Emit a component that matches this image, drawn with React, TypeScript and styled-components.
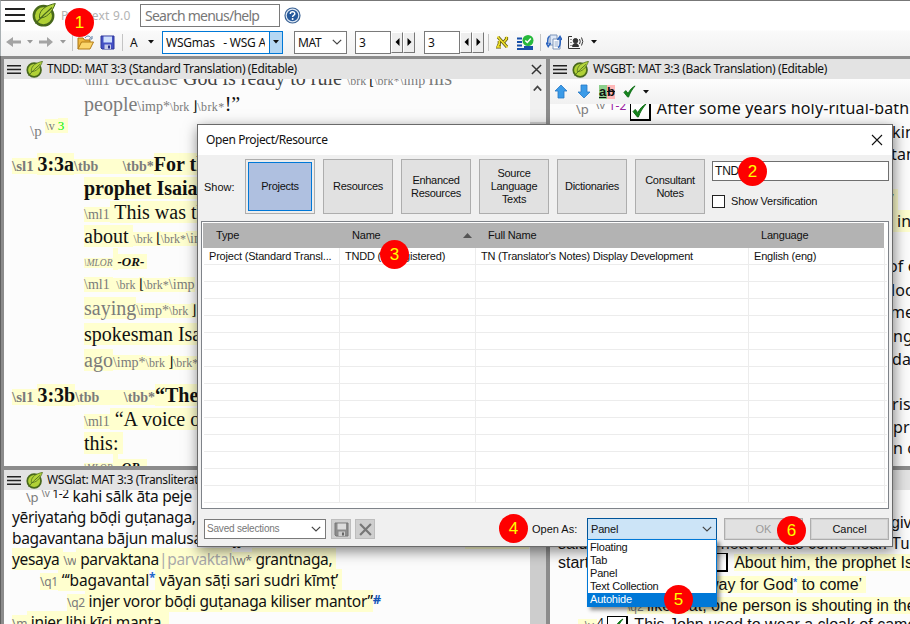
import React from 'react';
import styled, { createGlobalStyle, css } from 'styled-components';

const ui = `"Noto Sans", "Open Sans", sans-serif`;
const sans = `"Liberation Sans", Arial, sans-serif`;
const serif = `"Liberation Serif", "Times New Roman", serif`;

const Global = createGlobalStyle`
  * { box-sizing: border-box; }
  html, body { margin: 0; padding: 0; overflow: hidden; }
  body { font-family: ${ui}; color: #111; }
`;

const Window = styled.div`
  width: 910px; height: 624px; overflow: hidden; position: relative;
  display: flex; flex-direction: column; background: #8c8c8c;
`;
const TopBar = styled.header`
  flex: none; height: 56px; display: flex; flex-direction: column;
  border-top: 1px solid #777; border-left: 1px solid #a9b0b3;
  background: linear-gradient(#fff 0, #fff 29px, #fafafa 30px, #f1f1f1 55px);
`;
const MenuRow = styled.div`display: flex; align-items: center; height: 28px; padding-left: 4px;`;
const AppTitle = styled.span<{ $ls?: number }>`
  width: 84px; padding-left: 5px; font-size: 12px; color: #b3b3b3; white-space: nowrap;
  letter-spacing: ${p => p.$ls ?? 0}px;
`;
const MenuSearch = styled.div`
  width: 140px; height: 23px; border: 1px solid #7a7a7a; background: #fff; margin-right: 4px;
  font: 14px/21px ${ui}; letter-spacing: -0.75px; color: #777; padding-left: 4px; white-space: nowrap;
`;
const ToolRow = styled.div`display: flex; align-items: center; height: 26px; padding-left: 5px;`;
const Space = styled.i<{ $w: number }>`flex: none; width: ${p => p.$w}px;`;
const Divider = styled.i`flex: none; width: 1px; height: 17px; background: #c4c4c4;`;
const Letter = styled.span`font-size: 12px; width: 9px;`;
const Field = styled.div<{ $w: number; $active?: boolean }>`
  flex: none; display: flex; width: ${p => p.$w}px; height: 23px; background: #fff;
  border: 1px solid ${p => (p.$active ? '#0078d7' : '#7a7a7a')};
  font: 12px/21px ${ui}; padding-left: 3px; white-space: pre; overflow: hidden;
`;
const FieldText = styled.span<{ $ls?: number; $cut?: number }>`
  flex: 1; overflow: hidden; letter-spacing: ${p => p.$ls ?? 0}px; margin-right: ${p => p.$cut ?? 0}px;
`;
const FieldDrop = styled.span`
  width: 13px; display: flex; align-items: center; justify-content: center;
  background: #b5d7f3; border-left: 1px solid #0078d7;
`;
const Spin = styled.span`
  flex: none; width: 12px; height: 21px; background: #eee; display: flex; align-items: center; justify-content: center;
  border: 1px solid #fff; border-right-color: #777; border-bottom-color: #777;
`;

const Workspace = styled.main`
  flex: 1; min-height: 0; display: grid; padding: 3px 0 0 3px; gap: 4px;
  grid-template-columns: 542px 1fr; grid-template-rows: 407px 1fr; border-left: 1px solid #5f5f5f;
`;
const Panel = styled.section`display: flex; flex-direction: column; min-width: 0; min-height: 0; background: #fcfcfc; overflow: hidden;`;
const PanelTitle = styled.div`
  flex: none; height: 20px; background: #e3e3e3; display: flex; align-items: center; padding-left: 3px;
  font-size: 12px; white-space: nowrap; color: #111;
`;
const TitleText = styled.span`flex: 1; padding-left: 4px; line-height: 20px; letter-spacing: -0.37px;`;
const PanelTools = styled.div`
  flex: none; height: 25px; display: flex; align-items: center; padding-left: 4px;
  background: linear-gradient(#fdfdfd, #f1f1f1);
`;
const PanelBody = styled.div`flex: 1; min-height: 0; display: flex;`;
const Doc = styled.div`flex: 1; min-width: 0; overflow: hidden; display: flow-root;`;
const ScrollBar = styled.div`flex: none; width: 16px; background: #f0f0f0; display: flex; flex-direction: column;`;
const ScrollArrow = styled.div`height: 43px; padding: 6px 0 0 3px; line-height: 0;`;
const Thumb = styled.div`flex: 1; background: #cdcdcd;`;

const fonts = {
  serif: css`font-family: ${serif}; font-size: 20px; line-height: 24px; height: 24px;`,
  ui: css`font-family: ${ui}; font-size: 16px; line-height: 21px; height: 21px;`,
  tight: css`font-family: ${ui}; font-size: 15.5px; line-height: 21px; height: 21px;`,
  sans: css`font-family: ${sans}; font-size: 16px; line-height: 21px; height: 21px;`,
};
const Line = styled.div<{ $f: keyof typeof fonts; $x: number; $gap?: number }>`
  ${p => fonts[p.$f]}
  letter-spacing: ${p => (p.$f === 'tight' ? -0.32 : p.$f === 'ui' ? 0.15 : 0)}px;
  padding-left: ${p => p.$x}px; margin-top: ${p => p.$gap ?? 0}px; white-space: pre; color: #111;
`;
const T = styled.span<{ $hl?: boolean; $b?: boolean; $i?: boolean; $c?: string; $s?: number; $ls?: number; $up?: number; $ml?: number }>`
  background: ${p => (p.$hl ? '#ffffcf' : 'transparent')};
  font-weight: ${p => (p.$b ? 700 : 400)};
  font-style: ${p => (p.$i ? 'italic' : 'normal')};
  ${p => p.$c && `color: ${p.$c};`}
  ${p => p.$s && `font-size: ${p.$s}px;`}
  ${p => p.$up && `position: relative; top: -${p.$up}px;`}
  ${p => p.$ls && `letter-spacing: ${p.$ls}px;`}
  margin-left: ${p => p.$ml ?? 0}px;
`;
const Mark = styled(T).attrs(p => ({ $c: p.$c ?? '#7b7b7b' }))``;
const VerseCheck = styled.span<{ $y?: number }>`
  display: inline-flex; width: 21px; height: 19px; border: 1px solid #000; border-bottom-width: 2px; border-right-width: 2px; background: #fff;
  align-items: center; justify-content: center; vertical-align: ${p => p.$y ?? -5}px; margin-right: 6px;
`;
const HiddenRun = styled.span`display: inline-block; width: 118px;`;

const Dialog = styled.section`
  position: absolute; left: 197px; top: 124px; width: 696px; height: 423px; border: 1px solid #6a6a6a;
  background: #f0f0f0; box-shadow: 1px 4px 13px rgba(0,0,0,.5); display: flex; flex-direction: column;
  font: 11px/13px ${sans}; color: #111; letter-spacing: -0.2px;
`;
const DialogTitle = styled.div`
  height: 30px; flex: none; background: #fff; display: flex; align-items: center; justify-content: space-between;
  padding: 0 9px 0 8px; font: 12px/30px ${ui}; letter-spacing: -0.38px;
`;
const Filters = styled.div`display: flex; padding: 4px 0 0 6px; height: 66px; gap: 8px;`;
const ShowLabel = styled.span`width: 33px; padding-top: 22px; letter-spacing: 0;`;
const FilterButton = styled.button<{ $on?: boolean }>`
  flex: none; width: 70px; height: 55px; padding: 0 8px; border: 1px solid #adadad; background: ${p => (p.$on ? '#afc0e0' : '#e1e1e1')};
  ${p => p.$on && 'box-shadow: inset 0 0 0 2px #eee, inset 0 0 0 3px #0078d7;'}
  font: inherit; letter-spacing: -0.3px; color: inherit; text-align: center; display: flex; align-items: center; justify-content: center;
`;
const SearchColumn = styled.div`display: flex; flex-direction: column; padding-top: 2px; margin-left: -1px;`;
const SearchInput = styled.div`width: 177px; height: 20px; border: 1px solid #6f6f6f; background: #fff; padding-left: 2px; font-size: 12px; line-height: 18px;`;
const CheckRow = styled.div`display: flex; align-items: center; gap: 6px; margin-top: 14px; height: 13px;`;
const CheckBox = styled.i`width: 13px; height: 13px; border: 1px solid #222; background: #fff;`;

const Table = styled.div`
  margin: 0 3px; width: 688px; height: 288px; border: 1px solid #7f8389; background: #fff; padding: 1px 3px 0 1px;
`;
const TableRow = styled.div<{ $head?: boolean }>`
  display: grid; grid-template-columns: 136px 136px 273px 136px; width: 683px;
  height: ${p => (p.$head ? 25 : 17)}px; margin-left: ${p => (p.$head ? 0 : 1)}px;
  border-bottom: ${p => (p.$head ? 0 : 1)}px solid #ececec;
  ${p => p.$head && 'background: #b3b3b3; width: 681px;'}
`;
const Cell = styled.div<{ $head?: boolean }>`
  display: flex; align-items: center; white-space: nowrap; overflow: hidden;
  padding: 0 4px 0 ${p => (p.$head ? 13 : 5)}px;
  border-right: ${p => (p.$head ? 0 : 1)}px solid #ececec; justify-content: space-between;
`;
const SortMark = styled.svg`margin-right: -1px;`;
const Footer = styled.div`display: flex; padding: 10px 0 0 6px; align-items: flex-start;`;
const Saved = styled.div`
  width: 122px; height: 20px; border: 1px solid #7a7a7a; background: #fff; color: #777; font-size: 10px; line-height: 18px;
  display: flex; align-items: center; justify-content: space-between; padding: 0 4px 0 2px; margin: 0 5px 0 0;
`;
const SmallButton = styled.span`
  width: 20px; height: 20px; background: #cfcfcf; border: 1px solid #bdbdbd; margin-right: 4px;
  display: flex; align-items: center; justify-content: center;
`;
const OpenAs = styled.span`margin-left: 153px; width: 55px; line-height: 20px; letter-spacing: 0;`;
const Combo = styled.div`
  flex: none; position: relative; width: 130px; height: 22px; margin-top: -1px; border: 1px solid #005499; background: #cce4f7;
  display: flex; align-items: center; justify-content: space-between; padding: 0 4px 0 3px;
`;
const List = styled.div`
  position: absolute; left: -1px; top: 20px; width: 130px; height: 68px; border: 1px solid #0078d7; background: #fff;
  box-shadow: 3px 3px 4px rgba(0,0,0,.45); padding-top: 1px;
`;
const Option = styled.div<{ $on?: boolean }>`
  height: 13px; line-height: 13px; padding-left: 2px; ${p => p.$on && 'background: #0078d7; color: #fff;'}
`;
const Push = styled.button<{ $off?: boolean; $w: number }>`
  flex: none; width: ${p => p.$w}px; height: 22px; margin: -1px 0 0 7px; padding: 0; border: 1px solid #adadad; background: #e1e1e1; font: inherit;
  box-shadow: inset 0 0 0 1px #d2d2d2; color: ${p => (p.$off ? '#9b9b9b' : '#111')};
`;
const Badge = styled.b<{ $x: number; $y: number }>`
  position: absolute; left: ${p => p.$x - 14.5}px; top: ${p => p.$y - 14.5}px; width: 29px; height: 29px; border-radius: 50%;
  background: #fe0000; color: #ff0; font: 17px/29px ${sans}; text-align: center;
`;

const Leaf = ({ s }: { s: number }) => (
  <svg width={s} height={s} viewBox="0 0 24 24">
    <circle cx="11.5" cy="12.7" r="9.700" fill="#b0d136" stroke="#48681c" strokeWidth="2.400" />
    <path d="M23.300.5C16 2 10 5 8 10.500c-.6 1.800-.7 3-.4 4.500C14 15 20 10 23.300.5Z" fill="#b4d53c" stroke="#48681c" strokeWidth="1" />
    <path d="M3.500 20.500C9 14.500 14 9.500 20 4.500" fill="none" stroke="#48681c" strokeWidth="1.200" />
  </svg>
);
const Burger = ({ w, h, t }: { w: number; h: number; t: number }) => (
  <svg width={w} height={h} viewBox={`0 0 ${w} ${h}`} fill="#222">
    <rect width={w} height={t} /><rect y={(h - t) / 2} width={w} height={t} /><rect y={h - t} width={w} height={t} />
  </svg>
);
const Down = ({ c = '#111' }: { c?: string }) => <svg width="6" height="4"><path d="M0 0h6L3 3.500Z" fill={c} /></svg>;
const Chevron = () => <svg width="10" height="6" viewBox="0 0 10 6"><path d="M.8.8 5 5 9.200.8" fill="none" stroke="#444" strokeWidth="1.200" /></svg>;
const ChevronBox = styled.span`display: flex; align-items: center; padding-right: 4px;`;
const Tri = ({ left }: { left?: boolean }) => <svg width="5" height="8"><path d={left ? 'M4.500 0v8L.5 4Z' : 'M.5 0v8l4-4Z'} fill="#000" /></svg>;
const Nav = ({ right }: { right?: boolean }) => (
  <svg width="15" height="12" viewBox="0 0 15 12"><path d={right ? 'M0 4.500h8V1l6 5-6 5V7.500H0Z' : 'M15 4.500H7V1L0 6l7 5V7.500h8Z'} fill="#a4a4a4" /></svg>
);
const Tick = ({ s }: { s: number }) => (
  <svg width={s} height={s} viewBox="0 0 14 14"><path d="M1 8l2-2 2.500 3C7.500 5 10 2.500 13 1 10 4.500 7.500 8.500 6 13H5Z" fill="#16861d" stroke="#0c6a13" strokeWidth=".9" /></svg>
);
const Cross = ({ s, c = '#333', t = 1.6 }: { s: number; c?: string; t?: number }) => (
  <svg width={s} height={s} viewBox="0 0 12 12"><path d="M1 1l10 10M11 1L1 11" stroke={c} strokeWidth={t} /></svg>
);
const Help = () => (
  <svg width="17" height="17" viewBox="0 0 17 17">
    <circle cx="8.500" cy="8.500" r="7.500" fill="#dfe9f5" stroke="#3a6294" strokeWidth="1.200" /><circle cx="8.500" cy="8.500" r="5.700" fill="#26599b" />
    <path d="M6.300 7c0-3 4.500-2.800 4.500-.3 0 1.600-2.200 1.500-2.200 3.200" fill="none" stroke="#fff" strokeWidth="1.500" /><circle cx="8.600" cy="12" r="1" fill="#fff" />
  </svg>
);
const Folder = () => (
  <svg width="17" height="15" viewBox="0 0 17 15">
    <path d="M1 14V3h5l1.500 2H13v3" fill="#f0b840" stroke="#a87210" /><path d="M1 14 4.500 7H16.500L13 14Z" fill="#fbd66c" stroke="#b27a14" />
    <path d="M8 3c2-3 5-2 6 0M15 1v3h-3" fill="none" stroke="#5e7fa8" />
  </svg>
);
const Disk = ({ gray }: { gray?: boolean }) => (
  <svg width="15" height="15" viewBox="0 0 15 15">
    <path d="M1 1h13v13H2L1 13Z" fill={gray ? '#8c8c8c' : '#4450c4'} stroke={gray ? '#777' : '#2f379a'} />
    <rect x="3.500" y="1.500" width="8.500" height="6" fill={gray ? '#dcdcdc' : '#cfdffc'} /><rect x="4.500" y="9.500" width="6.500" height="4.500" fill={gray ? '#ccc' : '#c8cbe8'} /><rect x="8" y="10.500" width="2" height="3" fill={gray ? '#666' : '#272f8c'} />
  </svg>
);
const Aleph = () => (
  <svg width="13" height="14" viewBox="0 0 13 14" fill="none">
    <path d="M2 2 11 12M10.500 2v2L8 7M3.300 6v3L2 12H5" stroke="#5a5208" strokeWidth="3.200" />
    <path d="M1.500 1.500 11.500 12.500M10.500 1.500V4L8 7M3.300 5.500V9L1.500 12H5" stroke="#efe02c" strokeWidth="1.700" />
  </svg>
);
const Checklist = () => (
  <svg width="17" height="15" viewBox="0 0 17 15">
    <path d="M0 3.500h5M0 7h5M0 10.500h5M0 14h16M7 12h9" stroke="#164fa8" strokeWidth="2" /><circle cx="11" cy="5.500" r="5.500" fill="#27b93b" />
    <path d="M8.300 5.500l2 2 3.500-4" fill="none" stroke="#fff" strokeWidth="1.500" />
  </svg>
);
const Sync = () => (
  <svg width="16" height="16" viewBox="0 0 16 16">
    <path d="M4 1h7v10H4z" fill="#dfe9f8" stroke="#7d94b8" /><path d="M7 5h7v10H7z" fill="#fff" stroke="#7d94b8" /><path d="M8.500 8h4M8.500 10h4M8.500 12h4" stroke="#8ea7cc" />
    <path d="M3.500 2C1 4 1.500 7 2 10M0 8.500l2.200 4L4.500 9M12 13.500C15 12 14.500 8 14 4.500M11.500 6 14 2.500 16 6" fill="none" stroke="#2a62bd" strokeWidth="1.500" />
  </svg>
);
const Speaker = () => (
  <svg width="17" height="13" viewBox="0 0 17 13" fill="none" stroke="#333">
    <path d="M4 .5H.5v12H12M2.500 3.500h1M2.500 6.500h1M2.500 9.500h1" /><circle cx="7.500" cy="4.800" r="2.300" fill="#333" /><path d="M4.500 10.500c0-4 6-4 6 0Z" fill="#333" /><path d="M11.500 3q1.500 2.500 0 5M13.500 1.500q2.500 4 0 8" />
  </svg>
);
const Arrow = ({ up }: { up?: boolean }) => (
  <svg width="14" height="15" viewBox="0 0 14 15"><path d={up ? 'M7 1 13 7H10v7H4V7H1Z' : 'M7 14 13 8H10V1H4V8H1Z'} fill="#3b9be8" stroke="#2878c4" strokeWidth=".8" /></svg>
);
const Ab = styled.span`
  display: flex; font: 700 13px/14px ${sans}; height: 14px;
  u { background: #8ccf8c; width: 8px; } s { background: #ffb8b8; width: 8px; }
`;

const Title = ({ text, close }: { text: string; close?: boolean }) => (
  <PanelTitle>
    <Burger w={14} h={9} t={1.500} /><Space $w={5} /><Leaf s={17} />
    <TitleText>{text}</TitleText>
    {close && <><Cross s={11} /><Space $w={4} /></>}
  </PanelTitle>
);
const Bar = () => (
  <ScrollBar><ScrollArrow><svg width="9" height="6"><path d="M.8 5.500 4.500 1.500l3.700 4" fill="none" stroke="#444" strokeWidth="1.800" /></svg></ScrollArrow><Thumb /></ScrollBar>
);

const filters = ['Projects', 'Resources', 'Enhanced Resources', 'Source Language Texts', 'Dictionaries', 'Consultant Notes'];
const options = ['Floating', 'Tab', 'Panel', 'Text Collection', 'Autohide'];
const tail: [number, number, string][] = [
  [45, 338, 'of each'], [24, 341, 'locusts'], [22, 340, 'me to'], [24, 343, 'ng the'], [23, 342, 'dance'], [45, 342, 'rises'], [23, 343, 'priests'], [21, 343, 'n came'],
];

export default function App() {
  return (
    <Window>
      <Global />
      <TopBar>
        <MenuRow>
          <Burger w={20} h={14} t={2} /><Space $w={7} /><Leaf s={24} />
          <AppTitle $ls={0.2}>Paratext 9.0</AppTitle>
          <MenuSearch>Search menus/help</MenuSearch><Help />
        </MenuRow>
        <ToolRow>
          <Nav /><Space $w={6} /><Down c="#999" /><Space $w={6} /><Nav right /><Space $w={6} /><Down c="#999" /><Space $w={6} /><Divider />
          <Space $w={4} /><Folder /><Space $w={6} /><Disk /><Space $w={7} /><Divider /><Space $w={7} />
          <Letter>A</Letter><Space $w={9} /><Down /><Space $w={8} />
          <Field $w={121} $active><FieldText $cut={4} $ls={-0.25}>WSGmas   - WSG A</FieldText><FieldDrop><Down /></FieldDrop></Field>
          <Space $w={11} />
          <Field $w={53}><FieldText $ls={-0.3}>MAT</FieldText><ChevronBox><Chevron /></ChevronBox></Field>
          <Space $w={8} /><Field $w={36}>3</Field><Spin><Tri left /></Spin><Spin><Tri /></Spin>
          <Space $w={9} /><Field $w={36}>3</Field><Spin><Tri left /></Spin><Spin><Tri /></Spin>
          <Space $w={4} /><Divider /><Space $w={7} /><Aleph /><Space $w={8} /><Checklist /><Space $w={6} /><Divider />
          <Space $w={5} /><Sync /><Space $w={6} /><Speaker /><Space $w={6} /><Down />
        </ToolRow>
      </TopBar>

      <Workspace>
        <Panel>
          <Title text="TNDD: MAT 3:3 (Standard Translation) (Editable)" close />
          <PanelBody>
            <Doc>
              <Line $f="serif" $x={80} $gap={-13}><Mark $s={14}>{'\\ml1'}</Mark><Mark>{' because '}</Mark><T $c="#444">God is ready to rule </T><Mark $s={12}>{'\\brk '}</Mark><T $s={14}>⌊</T><Mark $s={12}>\brk*</Mark><Mark $s={14}>\imp </Mark><Mark>his</Mark></Line>
              <Line $f="serif" $x={80} $gap={2}><Mark>people</Mark><Mark $s={14}>\imp*</Mark><Mark $s={12}>{'\\brk '}</Mark><T $s={14}>⌋</T><Mark $s={12} $ls={0.4}>\brk*</Mark><T>!”</T></Line>
              <Line $f="serif" $x={26} $gap={1}><Mark $s={15}>{'\\p '}</Mark><Mark $hl $s={12} $up={6}>{'\\v '}</Mark><T $hl $s={13} $up={6} $c="#00f000">{'3 '}</T></Line>
              <Line $f="serif" $x={8} $gap={11}><Mark $hl $b $s={15}>{'\\sl1 '}</Mark><T $hl $b>3:3a</T><Mark $hl $b $s={14}>{'\\tbb       \\tbb*'}</Mark><T $hl $b>For the</T></Line>
              <Line $f="serif" $x={80}><T $hl $b>prophet Isaiah</T></Line>
              <Line $f="serif" $x={80}><Mark $hl $s={14}>{'\\ml1'}</Mark><T $hl>{' This was the'}</T></Line>
              <Line $f="serif" $x={80}><T $hl>{'about '}</T><Mark $hl $s={12}>{'\\brk '}</Mark><T $hl $s={14}>⌊</T><Mark $hl $s={12}>\brk*</Mark><Mark $hl $s={14}>\imp</Mark></Line>
              <Line $f="serif" $x={80} $gap={-1}><Mark $hl $i $s={9.500}>{'\\MLOR'}</Mark><T $hl $i $s={20}>{' '}</T><T $hl $b $i $s={13}>{'-OR- '}</T></Line>
              <Line $f="serif" $x={80} $gap={-1}><Mark $hl $s={14}>{'\\ml1 '}</Mark><Mark $hl $s={12}>{' \\brk '}</Mark><T $hl $s={14}>⌊</T><Mark $hl $s={12}>\brk*</Mark><Mark $hl $s={14}>\imp</Mark></Line>
              <Line $f="serif" $x={80} $gap={2}><Mark $hl>saying</Mark><Mark $hl $s={14}>\imp*</Mark><Mark $hl $s={12}>{'\\brk '}</Mark><T $hl $s={14}>⌋</T></Line>
              <Line $f="serif" $x={80} $gap={2}><T $hl>spokesman Isaiah</T></Line>
              <Line $f="serif" $x={80} $gap={2}><Mark $hl>ago</Mark><Mark $hl $s={14}>\imp*</Mark><Mark $hl $s={12}>{'\\brk '}</Mark><T $hl $s={14}>⌋</T><Mark $hl $s={12}>\brk*</Mark></Line>
              <Line $f="serif" $x={8} $gap={11}><Mark $hl $b $s={15}>{'\\sl1 '}</Mark><T $hl $b>3:3b</T><Mark $hl $b $s={14}>{'\\tbb       \\tbb*'}</Mark><T $hl $b>“There</T></Line>
              <Line $f="serif" $x={80}><Mark $hl $s={14}>{'\\ml1'}</Mark><T $hl>{' “A voice of'}</T></Line>
              <Line $f="serif" $x={80}><T $hl>{'this: '}</T></Line>
              <Line $f="serif" $x={80} $gap={-3}><Mark $hl $i $s={9.500}>{'\\MLOR'}</Mark><T $hl $i $s={20}>{' '}</T><T $hl $b $i $s={13}>{'-OR- '}</T></Line>
            </Doc>
            <Bar />
          </PanelBody>
        </Panel>

        <Panel>
          <Title text="WSGBT: MAT 3:3 (Back Translation) (Editable)" />
          <PanelTools><Arrow up /><Space $w={9} /><Arrow /><Space $w={8} /><Ab><u>a</u><s>b</s></Ab><Space $w={8} /><Tick s={13} /><Space $w={7} /><Down /></PanelTools>
          <Doc>
            <Line $f="ui" $x={26} $gap={-6}><Mark $s={13} $ls={0.01}>{'\\p '}</Mark><Mark $s={11} $up={5} $ml={3}>{'\\v'}</Mark><T $s={12} $up={4} $c="#9a20a0">{' 1-2 '}</T><VerseCheck $y={-4}><Tick s={15} /></VerseCheck><T>After some years holy-ritual-bath</T></Line>
            <Line $f="ui" $x={342} $gap={3}>king</Line>
            <Line $f="ui" $x={341} $gap={1}>tand</Line>
            <Line $f="ui" $x={279} $gap={25}><T $hl>{'prophet’ '}</T></Line>
            <Line $f="ui" $x={309} $gap={0}><T $hl>{'him  in the'}</T></Line>
            {tail.map(([step, x, text]) => <Line key={text} $f="ui" $x={x} $gap={step - 21}>{text}</Line>)}
          </Doc>
        </Panel>

        <Panel>
          <Title text="WSGlat: MAT 3:3 (Transliteration) (Editable)" />
          <PanelBody>
            <Doc>
              <Line $f="tight" $x={22} $gap={-4}><Mark $s={13}>{'\\p '}</Mark><Mark $s={10} $up={5}>{'\\v'}</Mark><T $s={12} $up={4}>{' 1-2'}</T>{' kahi sālk āta peje'}</Line>
              <Line $f="tight" $x={8}>yēriyataṅg bōḍi guṭanaga,</Line>
              <Line $f="tight" $x={8}>bagavantana bājun malusa sāṭi jy<T $hl $ml={220}>{'sari sudri'}</T></Line>
              <Line $f="tight" $x={8}><T $hl>{'yesaya '}</T><Mark $hl $s={12}>{'\\w'}</Mark><T $hl>{' parvaktana'}</T><Mark $hl $c="#aaa">|parvaktal</Mark><Mark $hl $s={12}>\w*</Mark><T $hl>{' grantnaga, '}</T></Line>
              <Line $f="tight" $x={36}><Mark $hl $s={12}>{'\\q1'}</Mark><T $hl $ls={-0.15}>{' “‘bagavantal'}</T><T $c="#2265c9" $b $s={12} $up={4}>*</T><T $hl $ls={-0.15}>{' vāyan sāṭi sari sudri kīmṭ’ '}</T></Line>
              <Line $f="tight" $x={63}><Mark $hl $s={12}>{'\\q2'}</Mark><T $hl>{' injer voror bōḍi guṭanaga kiliser mantor”'}</T><T $c="#1456b5" $b $s={13} $up={3}>#</T></Line>
              <Line $f="tight" $x={8}><Mark $hl $s={12}>{'\\m'}</Mark><T $hl>{' injer lihi kīci manta. '}</T></Line>
            </Doc>
            <ScrollBar><Thumb /></ScrollBar>
          </PanelBody>
        </Panel>

        <Panel>
          <Title text="TPT: MAT 3:3 (Auxiliary) (Editable)" />
          <Doc>
            <Line $f="sans" $x={341} $gap={22}>giving</Line>
            <Line $f="sans" $x={8}>said, “The kingdom of  heaven has come near. Turn</Line>
            <Line $f="sans" $x={8} $gap={-2}>start<HiddenRun /><VerseCheck $y={-4} /><T $hl>About him, the prophet Isaiah</T></Line>
            <Line $f="sans" $x={69} $gap={1}><T $hl>Prepare the way for God</T><T $c="#2265c9" $b $s={10} $up={4}>*</T><T $hl>{' to come’ '}</T></Line>
            <Line $f="sans" $x={77} $gap={0}><Mark $hl $s={12}>{'\\q2 '}</Mark><T $hl>like that, one person is shouting in the</T></Line>
            <Line $f="sans" $x={28} $gap={-2}><Mark $hl $s={12}>{'  \\v '}</Mark><T $s={12} $up={3}>{'4 '}</T><VerseCheck $y={-2}><Tick s={14} /></VerseCheck>This John used to wear a cloak of camel</Line>
          </Doc>
        </Panel>
      </Workspace>

      <Dialog>
        <DialogTitle>Open Project/Resource<Cross s={12} c="#111" t={1.100} /></DialogTitle>
        <Filters>
          <ShowLabel>Show:</ShowLabel>
          {filters.map((f, i) => <FilterButton key={f} $on={i === 0}>{f}</FilterButton>)}
          <SearchColumn><SearchInput>TNDD</SearchInput><CheckRow><CheckBox />Show Versification</CheckRow></SearchColumn>
        </Filters>
        <Table>
          <TableRow $head>
            <Cell $head>Type</Cell><Cell $head>Name<SortMark width="9" height="5"><path d="M0 5 4.500 0 9 5Z" fill="#555" /></SortMark></Cell><Cell $head>Full Name</Cell><Cell $head>Language</Cell>
          </TableRow>
          <TableRow><Cell>Project (Standard Transl...</Cell><Cell>TNDD (Unregistered)</Cell><Cell>TN (Translator's Notes) Display Development</Cell><Cell>English (eng)</Cell></TableRow>
          {Array.from({ length: 14 }, (_, i) => <TableRow key={i}><Cell /><Cell /><Cell /><Cell /></TableRow>)}
        </Table>
        <Footer>
          <Saved>Saved selections<Chevron /></Saved>
          <SmallButton><Disk gray /></SmallButton><SmallButton><Cross s={13} c="#777" t={2} /></SmallButton>
          <OpenAs>Open As:</OpenAs>
          <Combo>Panel<Chevron />
            <List>{options.map(o => <Option key={o} $on={o === 'Autohide'}>{o}</Option>)}</List>
          </Combo>
          <Push $off $w={79}>OK</Push><Push $w={79}>Cancel</Push>
        </Footer>
      </Dialog>

      <Badge $x={79.500} $y={22.500}>1</Badge>
      <Badge $x={752.500} $y={171.500}>2</Badge>
      <Badge $x={394.500} $y={254.500}>3</Badge>
      <Badge $x={513.500} $y={528.500}>4</Badge>
      <Badge $x={678.500} $y={599.500}>5</Badge>
      <Badge $x={791.500} $y={530.500}>6</Badge>
    </Window>
  );
}
